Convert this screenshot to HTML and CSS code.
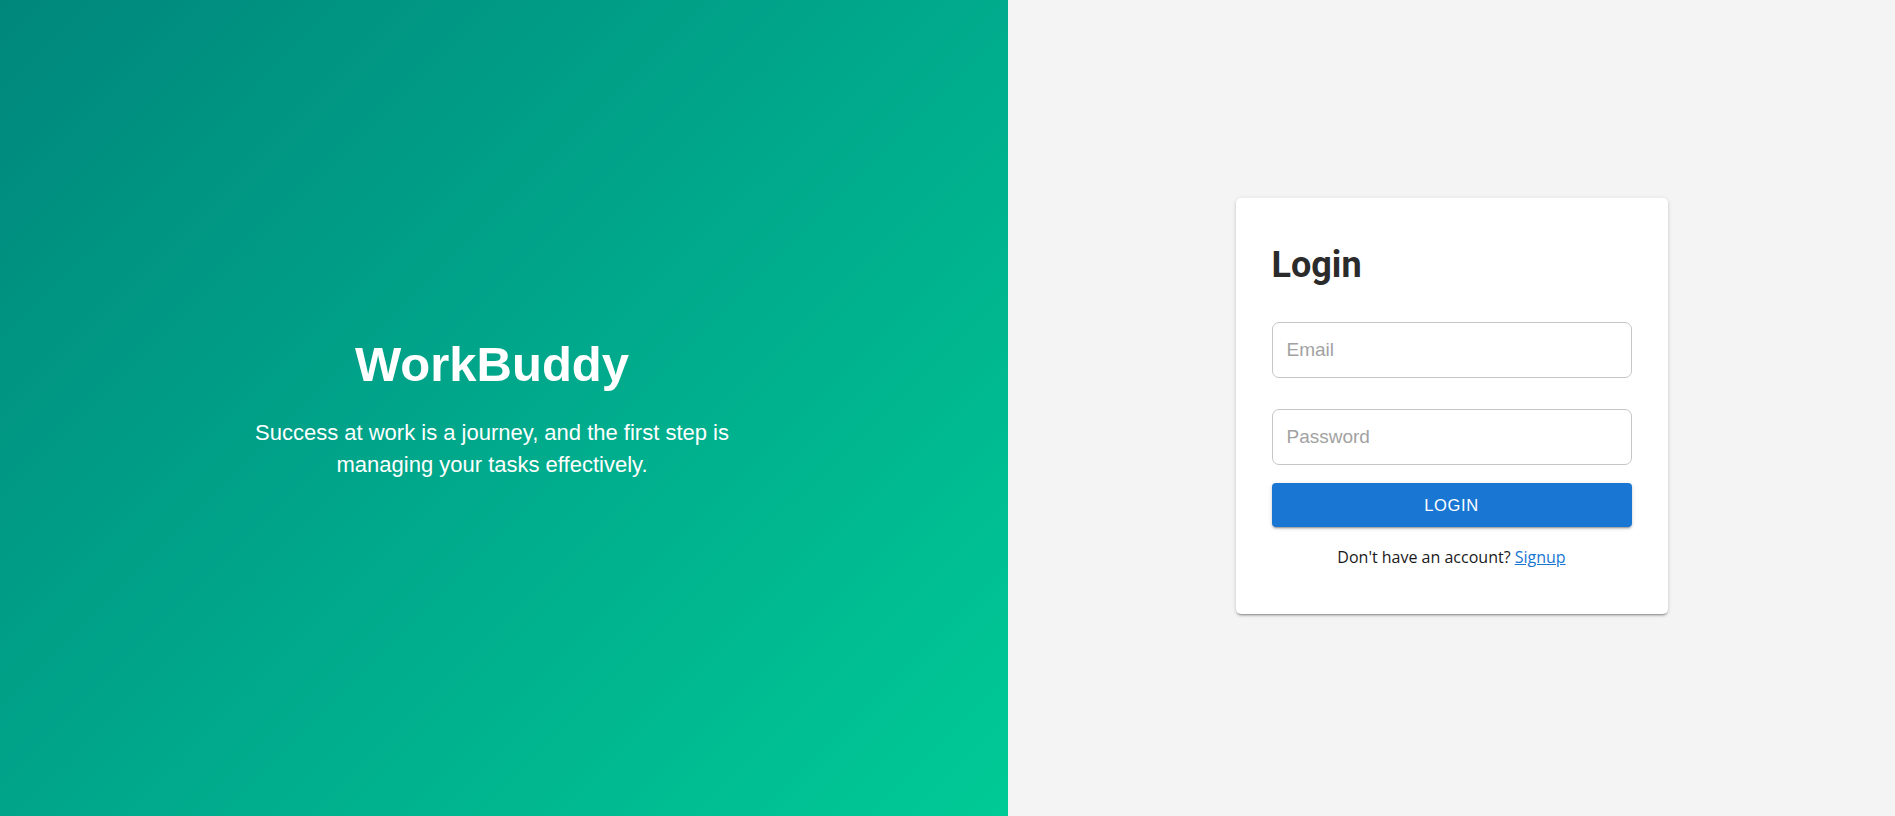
FILE: index.html
```html
<!DOCTYPE html>
<html lang="en">
<head>
<meta charset="utf-8">
<title>WorkBuddy - Login</title>
<link rel="stylesheet" href="styles.css">
</head>
<body>
<div class="page">
  <section class="hero">
    <div class="hero-inner">
      <h1 class="brand">WorkBuddy</h1>
      <p class="tagline">Success at work is a journey, and the first step is managing your tasks effectively.</p>
    </div>
  </section>
  <section class="auth">
    <div class="card">
      <h2 class="card-title">Login</h2>
      <form class="form">
        <input class="field" type="email" placeholder="Email">
        <input class="field field-pass" type="password" placeholder="Password">
        <button class="btn" type="button">LOGIN</button>
      </form>
      <p class="alt">Don't have an account? <a href="#" class="link">Signup</a></p>
    </div>
  </section>
</div>
</body>
</html>
```

FILE: styles.css
```css
* { box-sizing: border-box; }
html, body { margin: 0; padding: 0; height: 100%; }
body { font-family: "Liberation Sans", Arial, sans-serif; }

.page {
  display: flex;
  height: 816px;
}

.hero {
  width: 1008px;
  flex: none;
  background: linear-gradient(135deg, #00877c 0%, #00a88b 50%, #00ca96 100%);
  display: flex;
  align-items: center;
  justify-content: center;
  padding-right: 24px;
  color: #fff;
}
.hero-inner {
  display: flex;
  flex-direction: column;
  align-items: center;
  text-align: center;
}
.brand {
  margin: 0 0 25px;
  font-size: 49px;
  line-height: 56px;
  font-weight: 700;
}
.tagline {
  margin: 0;
  max-width: 530px;
  font-size: 22px;
  line-height: 32px;
}

.auth {
  flex: 1;
  background: #f4f4f4;
  display: flex;
  align-items: center;
  justify-content: center;
}
.card {
  width: 432px;
  margin-bottom: 4px;
  background: #fff;
  border-radius: 5px;
  padding: 36px 36px 45px;
  box-shadow: 0 3px 1px -2px rgba(0,0,0,0.2), 0 2px 2px 0 rgba(0,0,0,0.14), 0 1px 5px 0 rgba(0,0,0,0.12);
}
.card-title {
  margin: 10px 0 35px;
  font-family: Roboto, "Liberation Sans", sans-serif;
  font-weight: 700;
  font-size: 36px;
  line-height: 43px;
  color: #2b2b2b;
}
.form {
  display: flex;
  flex-direction: column;
}
.field {
  height: 56px;
  border: 1px solid #c6c6c6;
  border-radius: 7px;
  padding: 0 14px;
  font-family: "Liberation Sans", Arial, sans-serif;
  font-size: 19px;
  color: #222;
  background: #fff;
  outline: none;
}
.field::placeholder { color: #a2a2a2; }
.field-pass { margin-top: 31px; }
.btn {
  margin-top: 18px;
  height: 44px;
  border: none;
  border-radius: 4px;
  background: #1976d2;
  color: #fff;
  font-family: "Liberation Sans", Arial, sans-serif;
  font-size: 16.5px;
  letter-spacing: 0.6px;
  box-shadow: 0 3px 1px -2px rgba(0,0,0,0.2), 0 2px 2px 0 rgba(0,0,0,0.14), 0 1px 5px 0 rgba(0,0,0,0.12);
  cursor: pointer;
}
.alt {
  margin: 18px 0 0;
  text-align: center;
  font-family: "Open Sans", "Noto Sans", sans-serif;
  font-size: 16px;
  line-height: 24px;
  color: #1a1a1a;
}
.link {
  color: #1976d2;
  text-decoration: underline;
}
```
